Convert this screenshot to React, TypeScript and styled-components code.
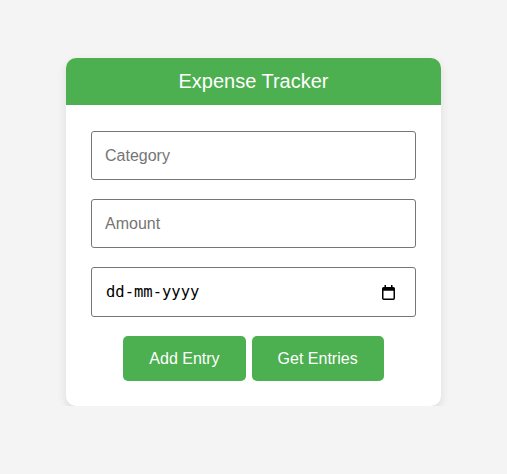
import styled, { createGlobalStyle } from "styled-components";

const GlobalStyle = createGlobalStyle`
    body {
        margin: 0;
        background-color: #f4f4f4;
        font-family: "Liberation Sans", Arial, sans-serif;
    }
`

const Page = styled.div`
    display: flex;
    justify-content: center;
    padding-top: 58px;
`

const Card = styled.div`
    width: 375px;
    background-color: #fff;
    border-radius: 10px;
    box-shadow: 0 4px 10px rgba(0, 0, 0, 0.1);
    overflow: hidden;
`

const Header = styled.h1`
    margin: 0;
    background-color: #4caf50;
    color: #fff;
    font-size: 20px;
    font-weight: normal;
    line-height: 23px;
    padding: 12px 0;
    text-align: center;
`

const Body = styled.div`
    padding: 26px 25px 25px;
    display: flex;
    flex-direction: column;
    gap: 19px;
`

const Input = styled.input`
    box-sizing: border-box;
    width: 100%;
    height: 49px;
    padding: 0 13px;
    border: 1px solid #767676;
    border-radius: 3px;
    font-family: "Liberation Sans", Arial, sans-serif;
    font-size: 16px;
    color: #000;

    &::placeholder {
        color: #757575;
    }
`

// date field: dd-mm-yyyy with the picker icon on the right
const DateField = styled.label`
    box-sizing: border-box;
    display: flex;
    align-items: center;
    height: 50px;
    padding: 0 20px 0 14px;
    border: 1px solid #767676;
    border-radius: 3px;
    background-color: #fff;
`

const DateInput = styled.input`
    flex: 1;
    min-width: 0;
    border: none;
    outline: none;
    padding: 0;
    font-family: "DejaVu Sans Mono", monospace;
    font-size: 15.5px;
    color: #000;

    &::placeholder {
        color: #000;
    }
`

const Buttons = styled.div`
    display: flex;
    justify-content: center;
    gap: 6px;
`

const Button = styled.button`
    height: 45px;
    padding: 0 26px;
    border: none;
    border-radius: 5px;
    background-color: #4caf50;
    color: #fff;
    font-family: "Liberation Sans", Arial, sans-serif;
    font-size: 16px;
    cursor: pointer;

    &:hover {
        background-color: #45a049;
    }
`

const CalendarIcon = () => (
    <svg width="13" height="15" viewBox="0 0 13 15">
        <rect x="2.5" y="0" width="1.5" height="3" fill="#000" />
        <rect x="9" y="0" width="1.5" height="3" fill="#000" />
        <rect x="0.75" y="2.75" width="11.5" height="11.5" rx="1" fill="none" stroke="#000" strokeWidth="1.5" />
        <rect x="0.75" y="2.75" width="11.5" height="3" fill="#000" />
    </svg>
)

export default function App() {
    return (
        <>
            <GlobalStyle />
            <Page>
                <Card>
                    <Header>Expense Tracker</Header>
                    <Body>
                        <Input type="text" placeholder="Category" />
                        <Input type="number" placeholder="Amount" />
                        <DateField>
                            <DateInput type="text" placeholder="dd-mm-yyyy" />
                            <CalendarIcon />
                        </DateField>
                        <Buttons>
                            <Button>Add Entry</Button>
                            <Button>Get Entries</Button>
                        </Buttons>
                    </Body>
                </Card>
            </Page>
        </>
    )
}
